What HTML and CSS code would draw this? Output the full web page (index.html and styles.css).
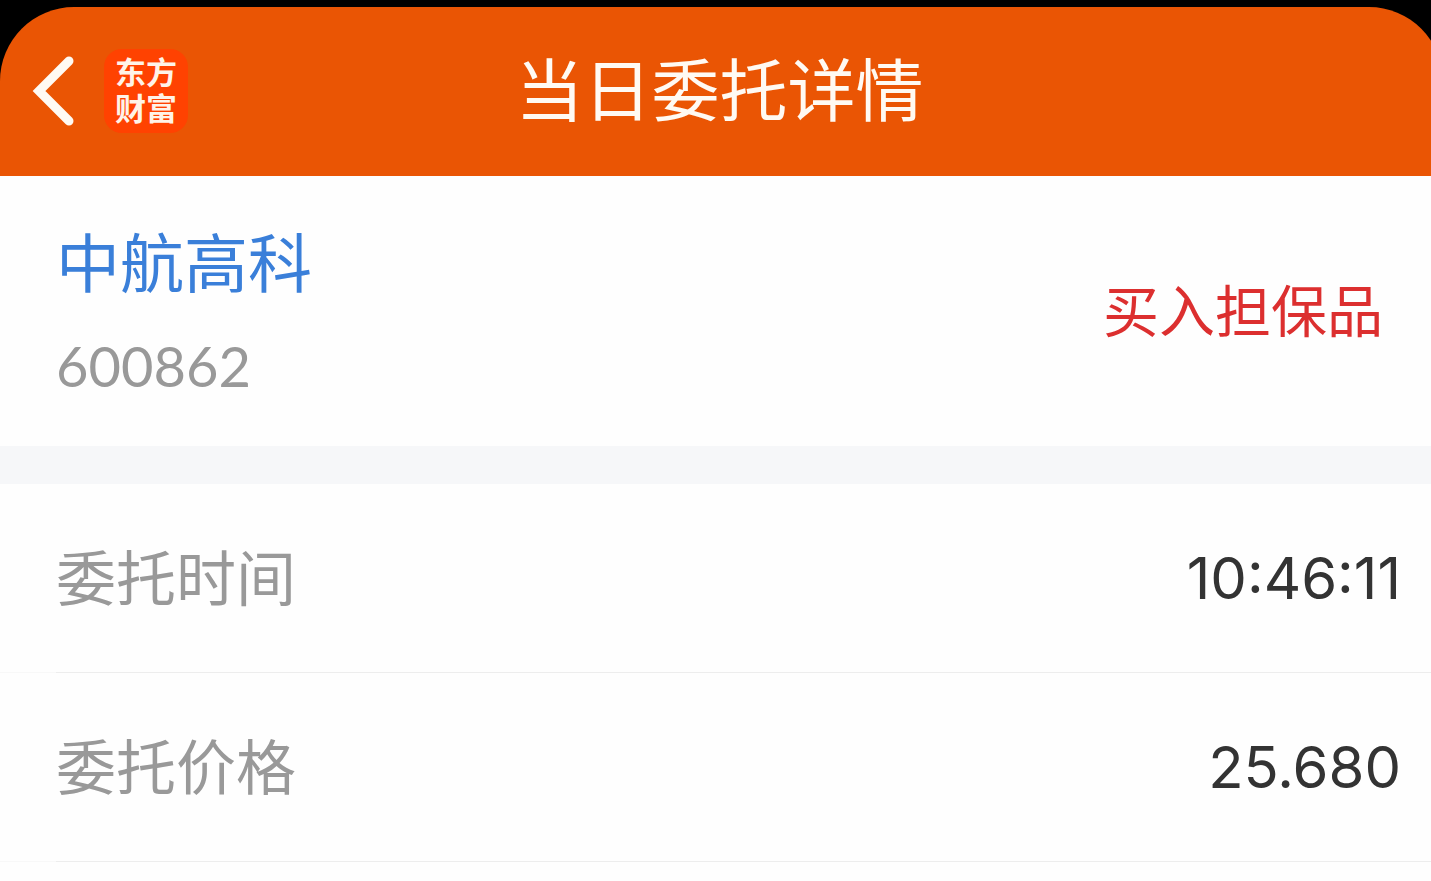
FILE: index.html
```html
<!DOCTYPE html>
<html lang="zh-CN">
<head>
    <meta charset="UTF-8">
    <meta name="viewport" content="width=device-width, initial-scale=1">
    <title>当日委托详情</title>
    <link rel="stylesheet" href="styles.css">
</head>
<body>
    <div class="screen">
        <header class="header">
            <div class="header-left">
                <button class="back" type="button" aria-label="返回">
                    <svg width="42" height="70" viewBox="0 0 42 70">
                        <path d="M37 5 L7 35 L37 65" fill="none" stroke="#fffaf3" stroke-width="9" stroke-linecap="round" stroke-linejoin="miter"/>
                    </svg>
                </button>
                <a class="logo" href="#"><span>东方</span><span>财富</span></a>
            </div>
            <h1 class="title">当日委托详情</h1>
        </header>
    </div>

    <main>
        <section class="stock">
            <div class="stock-info">
                <h2 class="stock-name">中航高科</h2>
                <div class="stock-code">600862</div>
            </div>
            <div class="side">买入担保品</div>
        </section>

        <dl class="details">
            <div class="row">
                <dt>委托时间</dt>
                <dd>10:46:11</dd>
            </div>
            <div class="row">
                <dt>委托价格</dt>
                <dd>25.680</dd>
            </div>
        </dl>
    </main>
</body>
</html>
```
FILE: styles.css
```css
* {
    box-sizing: border-box;
}
body {
    margin: 0;
    background-color: #fefefe;
    color: #333;
    font-family: Inter, "Noto Sans CJK SC", sans-serif;
}
h1, h2, dl, dd {
    margin: 0;
    font-weight: 400;
}
.screen {
    padding-top: 7px;
    background-color: #000;
    overflow: hidden;
}
.header {
    display: grid;
    grid-template-columns: 1fr auto 1fr;
    align-items: center;
    height: 169px;
    margin-right: -12px;
    padding: 0 36px 2px 32px;
    border-radius: 74px 74px 0 0;
    background-color: #ea5504;
}
.header-left {
    display: flex;
    align-items: center;
    gap: 30px;
}
.back {
    display: flex;
    padding: 0;
    border: none;
    background: none;
    cursor: pointer;
}
.logo {
    display: flex;
    flex-direction: column;
    align-items: center;
    justify-content: center;
    width: 84px;
    height: 84px;
    border-radius: 18px;
    background-color: #ff4201;
    color: #fff3e8;
    font-size: 31px;
    font-weight: 700;
    line-height: 36px;
    text-decoration: none;
}
.title {
    color: #fffaf3;
    font-size: 68px;
    line-height: 84px;
}
.stock {
    display: flex;
    align-items: center;
    justify-content: space-between;
    padding: 0 48px 0 56px;
}
.stock-info {
    padding: 40px 0 26px;
}
.stock-name {
    color: #3a7fd9;
    font-size: 64px;
    line-height: 96px;
}
.stock-code {
    color: #999;
    font-family: Lato, sans-serif;
    font-size: 56px;
    line-height: 108px;
}
.side {
    color: #dc2f2f;
    font-size: 56px;
    line-height: 84px;
    padding-top: 2px;
}
.details {
    border-top: 38px solid #f6f7f9;
}
.row {
    display: flex;
    align-items: center;
    justify-content: space-between;
    height: 189px;
    padding: 0 30px 0 56px;
    border-bottom: 1px solid #f9f9f9;
    background: linear-gradient(#ececec, #ececec) 56px 100% / 100% 1px no-repeat border-box;
    border-bottom-color: rgba(240, 240, 240, 0.4);
}
.row dt {
    color: #999;
    font-size: 60px;
    padding-bottom: 8px;
}
.row dd {
    font-size: 58px;
}
```
